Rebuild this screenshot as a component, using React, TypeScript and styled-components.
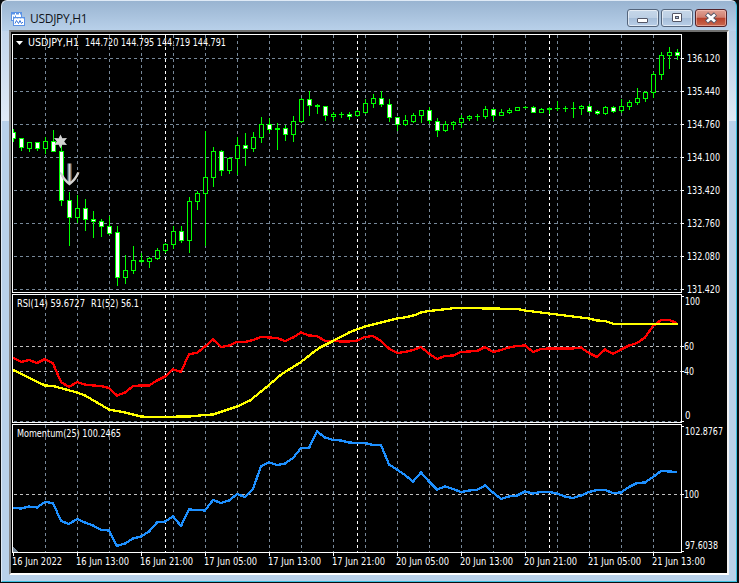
import React from "react";
import styled, { createGlobalStyle, css } from "styled-components";

const GlobalStyle = createGlobalStyle`
  * { box-sizing: border-box; }
  body { margin: 0; background: #000; overflow: hidden; }
`;

const Frame = styled.div`
  width: 739px;
  height: 583px;
  padding: 0 2px 1px 1px;
  background: #0b0d10;
`;

const FrameBody = styled.div`
  display: flex;
  flex-direction: column;
  width: 736px;
  height: 582px;
  padding: 0 7px 5px 7px;
  border: solid #3cc0e0;
  border-width: 1px 1px 1px 0;
  border-top-color: #dfeaf6;
  border-left: 1px solid #dfeaf6;
  border-radius: 6px 6px 0 0;
  background:
    linear-gradient(#c3d6ec, #e0eaf6) left 30px / 7px 90px no-repeat,
    linear-gradient(#b6cce4, #e0eaf6) right 30px / 7px 90px no-repeat,
    linear-gradient(#99b4d1 0, #b9d1ea 30px, #b9d1ea 100%);
`;

const TitleBar = styled.header`
  display: flex;
  align-items: flex-start;
  height: 29px;
  flex: none;
  padding: 8px 2px 0 2px;
`;

const TitleIcon = styled.svg`
  width: 16px;
  height: 16px;
  margin-top: 2px;
  flex: none;
`;

const Title = styled.h1`
  margin: 0 0 0 3px;
  flex: 1;
  font: 400 12px/20px "Open Sans", "Noto Sans", sans-serif;
  letter-spacing: -0.3px;
  color: #101418;
`;

const Controls = styled.div`
  display: flex;
  gap: 2px;
`;

const ControlButton = styled.button<{ $danger?: boolean }>`
  display: flex;
  align-items: center;
  justify-content: center;
  width: 32px;
  height: 18px;
  padding: 0;
  border: 1px solid #54657c;
  border-radius: 3px;
  box-shadow: inset 0 0 0 1px rgba(255, 255, 255, 0.55);
  background: linear-gradient(#c6d7e9 0, #bccfe4 48%, #a5bdd8 50%, #b9cfe8 100%);
  ${(p) =>
    p.$danger &&
    css`
      border-color: #53232a;
      box-shadow: inset 0 0 0 1px rgba(255, 210, 200, 0.5);
      background: linear-gradient(#e0a194 0, #cf7f70 46%, #b8402a 50%, #c9694f 100%);
    `}
`;

const Client = styled.main`
  display: flex;
  flex-direction: column;
  width: 720px;
  height: 545px;
  flex: none;
  border: 2px solid #fff;
  border-top-color: #70706f;
  border-left-color: #858585;
  border-right-color: #f2f2f2;
  background: #000;
`;

const Pane = styled.svg`
  display: block;
  flex: none;
  width: 716px;
  shape-rendering: crispEdges;
`;

const Label = styled.text`
  font-family: "DejaVu Sans Condensed", "DejaVu Sans", sans-serif;
  font-stretch: condensed;
  font-size: 10.8px;
  fill: #fff;
  white-space: pre;
`;

const GRID = "#778899";
const LEVEL = "#c0c0c0";
const LIME = "#00ff00";

type Candle = [high: number, top: number, bottom: number, low: number, bearish: 0 | 1];

const candles: Candle[] = [
  [129, 132, 138, 141, 1], [138, 138, 147, 150, 1], [142, 142, 148, 151, 0], [142, 142, 148, 150, 1],
  [137, 141, 148, 153, 0], [130, 141, 151, 151, 1], [145, 151, 200, 205, 1], [192, 200, 217, 245, 1],
  [195, 208, 217, 222, 0], [199, 208, 219, 230, 1], [211, 219, 221, 237, 1], [219, 221, 226, 236, 1],
  [216, 226, 233, 234, 1], [226, 232, 277, 285, 1], [255, 270, 277, 283, 0], [246, 260, 270, 273, 0],
  [253, 260, 261, 262, 1], [257, 258, 261, 267, 0], [248, 250, 258, 259, 0], [243, 244, 250, 252, 0],
  [226, 231, 244, 248, 0], [226, 231, 240, 242, 1], [197, 201, 240, 252, 0], [191, 193, 201, 209, 0],
  [131, 177, 193, 245, 0], [147, 151, 177, 186, 0], [150, 151, 170, 175, 1], [157, 158, 170, 173, 0],
  [137, 145, 158, 174, 0], [133, 145, 148, 165, 1], [132, 137, 148, 151, 0], [117, 124, 137, 142, 0],
  [118, 124, 129, 132, 1], [123, 128, 129, 149, 1], [125, 128, 134, 140, 1], [116, 121, 134, 141, 0],
  [98, 99, 121, 122, 0], [91, 99, 105, 115, 1], [104, 105, 106, 113, 1], [106, 106, 115, 120, 1],
  [112, 114, 116, 120, 0], [112, 114, 114, 117, 0], [112, 114, 116, 119, 1], [110, 111, 115, 116, 0],
  [99, 103, 112, 113, 0], [94, 98, 103, 107, 0], [91, 98, 104, 106, 1], [99, 104, 117, 121, 1],
  [117, 117, 124, 130, 1], [115, 120, 124, 125, 0], [113, 115, 121, 122, 0], [110, 110, 115, 122, 0],
  [107, 110, 120, 123, 1], [118, 121, 130, 136, 1], [121, 124, 130, 131, 0], [121, 122, 124, 129, 0],
  [115, 118, 122, 127, 0], [115, 116, 118, 120, 0], [114, 116, 116, 120, 0], [106, 109, 116, 118, 0],
  [109, 109, 115, 120, 1], [109, 112, 115, 115, 0], [108, 110, 112, 113, 0], [107, 107, 110, 110, 0],
  [106, 107, 107, 108, 0], [106, 107, 112, 112, 1], [108, 109, 112, 112, 0], [107, 108, 109, 113, 1],
  [101, 108, 108, 110, 0], [106, 108, 108, 111, 0], [102, 108, 108, 117, 0], [105, 106, 108, 114, 0],
  [104, 106, 111, 112, 1], [110, 111, 113, 114, 1], [106, 107, 113, 114, 0], [106, 107, 111, 112, 1],
  [99, 106, 110, 112, 0], [100, 102, 106, 109, 0], [88, 98, 102, 104, 0], [91, 92, 98, 101, 0],
  [72, 74, 92, 97, 0], [52, 55, 74, 79, 0], [47, 52, 55, 68, 0], [49, 52, 55, 59, 1],
];

const rsi = [
  357.5, 362, 360, 363, 359, 363.5, 382, 387, 382, 384.5, 385.5, 386, 388, 395.5, 392.5, 386, 385.5, 385.5,
  380.5, 376.5, 369.5, 372, 354, 353, 346.5, 339.5, 347, 345.5, 342, 342, 340, 337, 337.5, 338, 341, 337.5,
  332.5, 335.5, 336, 341, 341, 341.5, 341.5, 340.5, 337, 336, 341, 348.5, 353, 352, 350, 347, 353.5, 359,
  356, 355.5, 352, 351.5, 351, 347, 352, 350, 347.5, 346, 345.5, 352, 349, 348.5, 348.5, 348.5, 348.5, 347.5,
  353, 357, 349.5, 354, 349.5, 345.5, 343, 337.5, 326, 320, 320, 323,
];

const momentum = [
  508, 508.5, 506.5, 507.5, 502, 503, 521, 524, 519, 522.5, 525.5, 530, 530.5, 546, 543.5, 538.5, 536.5,
  531.5, 522.5, 521.5, 516.5, 526, 509.5, 510, 510.5, 500, 503, 500.5, 494, 497, 489, 466, 462.5, 465, 463.5,
  458, 448, 448, 431.5, 437.5, 440, 440.5, 442.5, 443, 443, 445, 445, 464.5, 469.5, 475, 481.5, 472.5, 481.5,
  489.5, 486.5, 489, 492, 490.5, 490, 485.5, 492.5, 499, 496.5, 495.5, 491.5, 493.5, 492, 492, 493.5, 496.5,
  498, 495.5, 492, 490, 490, 493, 492.5, 487, 483, 482.5, 477, 471, 471.5, 472,
];

const average =
  "13,370 45,385.5 53,386 77,392.5 85,395.5 109,409.5 125,412.5 141,416.5 149,417 189,416.5 205,415 " +
  "213,414.5 237,406.5 250,400.5 269,385 280,375.5 285,372 301,362 313,352.5 320,347.5 333,341 350,332 " +
  "365,326.5 397,318.5 407,317 415,315 421,312.5 429,311 443,309.5 455,308 493,308.5 517,309 525,310.5 " +
  "557,314.5 589,318.5 597,320.5 605,321 614,324 678,324";

const barX = (i: number) => 13 + i * 8;
const toPoints = (ys: number[]) => ys.map((y, i) => `${barX(i)},${y}`).join(" ");

const hours = Array.from({ length: 20 }, (_, i) => 45 + i * 32);
const days = [165, 357, 549];

function PaneGrid({ top, bottom, levels, levelColor }: { top: number; bottom: number; levels: number[]; levelColor: string }) {
  return (
    <g fill="none" strokeDasharray="3 3">
      {hours.map((x) => (
        <path key={x} d={`M${x + 0.5} ${top + 1}V${bottom}`} stroke={GRID} />
      ))}
      {levels.map((y) => (
        <path key={y} d={`M14 ${y + 0.5}H681`} stroke={levelColor} />
      ))}
      {days.map((x) => (
        <path key={x} d={`M${x + 0.5} ${top + 1}V${bottom}`} stroke="#fff" />
      ))}
    </g>
  );
}

function PaneBorder({ top, bottom }: { top: number; bottom: number }) {
  return <rect x="12.5" y={top + 0.5} width="669" height={bottom - top} fill="none" stroke="#fff" />;
}

function Series({ points, color }: { points: string; color: string }) {
  return <polyline points={points} fill="none" stroke={color} strokeWidth="2.3" strokeLinejoin="round" />;
}

function CandleBar({ x, data }: { x: number; data: Candle }) {
  const [high, top, bottom, low, bearish] = data;
  return (
    <g fill={LIME}>
      <rect x={x} y={high} width="1" height={low - high + 1} />
      <rect x={x - 2} y={top} width="5" height={bottom - top + 1} />
      {bottom - top > 1 && (
        <rect x={x - 1} y={top + 1} width="3" height={bottom - top - 1} fill={bearish ? "#fff" : "#000"} />
      )}
    </g>
  );
}

function PriceLabel({ y, text, width, x = 687, tick = y - 4 }: { y: number; text: string; width: number; x?: number; tick?: number }) {
  return (
    <g>
      <rect x="682" y={tick} width="2" height="1" fill="#fff" />
      <Label x={x} y={y} textLength={width} lengthAdjust="spacingAndGlyphs">{text}</Label>
    </g>
  );
}

const prices = ["136.120", "135.440", "134.760", "134.100", "133.420", "132.760", "132.080", "131.420"];
const times = [
  "16 Jun 2022", "16 Jun 13:00", "16 Jun 21:00", "17 Jun 05:00", "17 Jun 13:00", "17 Jun 21:00",
  "20 Jun 05:00", "20 Jun 13:00", "20 Jun 21:00", "21 Jun 05:00", "21 Jun 13:00",
];

function PricePane() {
  return (
    <Pane viewBox="11 32 716 262" height="262">
      <PaneGrid top={34} bottom={292} levels={prices.map((_, i) => 58 + i * 33)} levelColor={GRID} />
      <clipPath id="plot"><rect x="13" y="35" width="668" height="257" /></clipPath>
      <g clipPath="url(#plot)">
        {candles.map((c, i) => <CandleBar key={i} x={barX(i)} data={c} />)}
      </g>
      <g shapeRendering="auto">
        <path d="M60.500 134.500L62.300 138.300L67 138L64.200 141.500L67 145L62.300 144.700L60.500 148.500L58.700 144.700L54 145L56.800 141.500L54 138L58.700 138.300Z" fill="#d3d3d3" />
        <path d="M68 163.500V183M60.300 172.500Q62 179 68.500 183.500" stroke="#5a8cc0" strokeWidth="1" fill="none" />
        <path d="M71 163.500V183M79 172Q77 179 70.500 183.500" stroke="#b88450" strokeWidth="1" fill="none" />
        <path d="M69.500 163.500V184M61 173Q63.500 179.500 69.500 184Q75.500 179.500 78.300 172.500" stroke="#d3d3d3" strokeWidth="2.200" fill="none" />
        <path d="M16 41H23L19.500 45Z" fill="#fff" />
      </g>
      <PaneBorder top={34} bottom={292} />
      <Label x="28" y="46" textLength="51" lengthAdjust="spacingAndGlyphs">USDJPY,H1</Label>
      <Label x="85" y="46" textLength="141" lengthAdjust="spacingAndGlyphs">144.720 144.795 144.719 144.791</Label>
      {prices.map((p, i) => <PriceLabel key={p} y={62 + i * 33} text={p} width={33} />)}
    </Pane>
  );
}

function RsiPane() {
  return (
    <Pane viewBox="11 294 716 130" height="130">
      <PaneGrid top={294} bottom={422} levels={[346, 371]} levelColor={LEVEL} />
      <path d="M14 421.5H681" stroke={GRID} strokeDasharray="3 3" />
      <Series points={toPoints(rsi)} color="#ff0000" />
      <Series points={average} color="#ffff00" />
      <PaneBorder top={294} bottom={422} />
      <Label x="17" y="307" textLength="68" lengthAdjust="spacingAndGlyphs">RSI(14) 59.6727</Label>
      <Label x="91" y="307" textLength="48" lengthAdjust="spacingAndGlyphs">R1(52) 56.1</Label>
      <PriceLabel x={685} y={305} text="100" width={15} tick={296} />
      <PriceLabel x={684} y={350} text="60" width={10} />
      <PriceLabel x={684} y={375} text="40" width={10} />
      <PriceLabel x={685} y={419} text="0" width={5.5} tick={421} />
    </Pane>
  );
}

function MomentumPane() {
  return (
    <Pane viewBox="11 424 716 149" height="149">
      <PaneGrid top={424} bottom={552} levels={[494]} levelColor={LEVEL} />
      <path d="M13 547L18 552H13Z" fill={GRID} />
      <Series points={toPoints(momentum)} color="#1e90ff" />
      <PaneBorder top={424} bottom={552} />
      <Label x="17" y="437" textLength="104" lengthAdjust="spacingAndGlyphs">Momentum(25) 100.2465</Label>
      <PriceLabel x={685} y={435} text="102.8767" width={38} tick={426} />
      <PriceLabel x={684} y={498} text="100" width={15} />
      <PriceLabel x={685} y={549} text="97.6038" width={33} tick={551} />
      {times.map((t, i) => (
        <g key={t}>
          <rect x={13 + i * 64} y="553" width="1" height="3" fill="#fff" />
          <Label x={12 + i * 64} y="565" textLength={i ? 53 : 50} lengthAdjust="spacingAndGlyphs">{t}</Label>
        </g>
      ))}
    </Pane>
  );
}

function ChartIcon() {
  return (
    <TitleIcon viewBox="0 0 16 16" aria-hidden>
      <rect x="0.5" y="1.5" width="10" height="8" fill="#fff" stroke="#5b93e6" />
      <path d="M1 2.500H11" stroke="#5b93e6" strokeWidth="2" strokeDasharray="3 1" />
      <path d="M2.500 8V5.500M4.500 6V4.500" stroke="#5b93e6" />
      <rect x="2.500" y="6.500" width="11" height="8" fill="#fff" stroke="#5b93e6" />
      <path d="M2.500 7H13.500" stroke="#5b93e6" strokeDasharray="2 1" />
      <path d="M4 12.500L5.500 9.500L7.500 12.500L9 9.500L10.500 12.500L12 11" fill="none" stroke="#3b78dc" />
    </TitleIcon>
  );
}

export default function App() {
  return (
    <>
      <GlobalStyle />
      <Frame>
        <FrameBody>
          <TitleBar>
            <ChartIcon />
            <Title>USDJPY,H1</Title>
            <Controls>
              <ControlButton aria-label="Minimize">
                <svg width="12" height="12" viewBox="0 0 12 12"><rect x="0.5" y="6.5" width="10" height="4" rx="0.5" fill="#fff" stroke="#535666" /></svg>
              </ControlButton>
              <ControlButton aria-label="Restore">
                <svg width="12" height="12" viewBox="0 0 12 12">
                  <rect x="1.5" y="1.5" width="9" height="8" rx="0.5" fill="#fff" stroke="#535666" />
                  <rect x="4.5" y="4.5" width="3" height="2" fill="#a9bfd8" stroke="#535666" />
                </svg>
              </ControlButton>
              <ControlButton $danger aria-label="Close">
                <svg width="14" height="12" viewBox="0 0 14 12">
                  <path d="M2.5 2L11.5 10M11.5 2L2.5 10" stroke="#535666" strokeWidth="4.6" />
                  <path d="M3 2.5L11 9.500M11 2.500L3 9.500" stroke="#fff" strokeWidth="2.800" />
                </svg>
              </ControlButton>
            </Controls>
          </TitleBar>
          <Client>
            <PricePane />
            <RsiPane />
            <MomentumPane />
          </Client>
        </FrameBody>
      </Frame>
    </>
  );
}
